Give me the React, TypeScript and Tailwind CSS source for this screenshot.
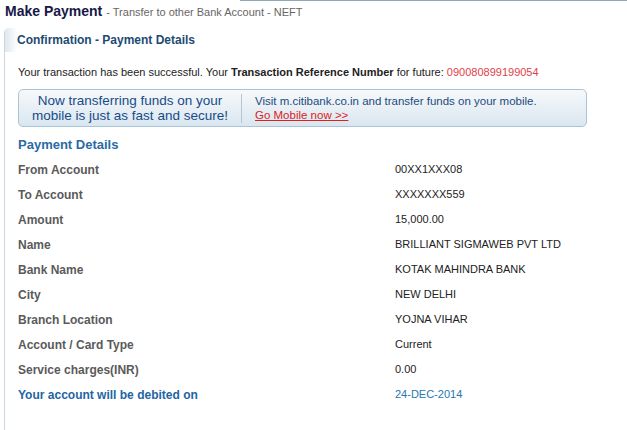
import React from 'react';

const rows: { label: string; value: string }[] = [
  { label: 'From Account', value: '00XX1XXX08' },
  { label: 'To Account', value: 'XXXXXXX559' },
  { label: 'Amount', value: '15,000.00' },
  { label: 'Name', value: 'BRILLIANT SIGMAWEB PVT LTD' },
  { label: 'Bank Name', value: 'KOTAK MAHINDRA BANK' },
  { label: 'City', value: 'NEW DELHI' },
  { label: 'Branch Location', value: 'YOJNA VIHAR' },
  { label: 'Account / Card Type', value: 'Current' },
  { label: 'Service charges(INR)', value: '0.00' },
];

const App: React.FC = () => {
  return (
    <div className="w-[627px] h-[430px] bg-white overflow-hidden font-['Liberation_Sans',Arial,sans-serif] flex flex-col">
      {/* top rule */}
      <div className="h-px ml-[240px] bg-[#8fa6b6]" />

      {/* Title */}
      <div className="flex items-baseline pl-[5px] pt-[2px] leading-[16px]">
        <span className="text-[14px] font-bold text-[#181848]">Make Payment</span>
        <span className="text-[11px] text-[#666] ml-[4px]">- Transfer to other Bank Account - NEFT</span>
      </div>

      {/* Panel */}
      <div className="flex-1 mt-[8px] ml-[4px] border-l border-[#c8d7e2] rounded-tl-[5px] flex flex-col">
        <div className="h-[24px] pl-[12px] rounded-tl-[5px] bg-gradient-to-r from-[#dfe7ee] from-0% via-white via-[2%] to-white text-[12px] font-bold text-[#1d4a72] leading-[24px]">
          Confirmation - Payment Details
        </div>

        <div className="pl-[13px] flex flex-col">
          <p className="mt-[14px] text-[11px] leading-[13px] text-[#222]">
            Your transaction has been successful. Your <span className="font-bold">Transaction Reference Number</span> for
            future: <span className="text-[#e2404a]">090080899199054</span>
          </p>

          {/* Mobile banner */}
          <div className="mt-[10px] w-[569px] h-[38px] rounded-[5px] border border-[#a9c4d7] bg-gradient-to-b from-[#f6f9fb] to-[#dae7f0] flex items-center">
            <div className="w-[222px] flex flex-col items-center text-[13.5px] leading-[15px] text-[#174b88]">
              <span>Now transferring funds on your</span>
              <span>mobile is just as fast and secure!</span>
            </div>
            <div className="w-px h-[29px] bg-[#b3c6d4]" />
            <div className="pl-[13px] flex flex-col items-start text-[11.5px] leading-[14px] text-[#1f4a7c]">
              <span>Visit m.citibank.co.in and transfer funds on your mobile.</span>
              <span className="text-[#e0201c] underline decoration-[#e0201c]">Go Mobile now &gt;&gt;</span>
            </div>
          </div>

          <h2 className="mt-[10px] text-[13px] leading-[15px] font-bold text-[#2b6aa6]">Payment Details</h2>

          <div className="mt-[5px] flex flex-col">
            {rows.map((r) => (
              <div key={r.label} className="h-[25px] flex items-center">
                <div className="w-[377px] text-[12px] font-bold text-[#5a5a5a]">{r.label}</div>
                <div className="text-[11px] text-[#222]">{r.value}</div>
              </div>
            ))}
            <div className="h-[25px] flex items-center">
              <div className="w-[377px] text-[12px] font-bold text-[#1f64a4]">Your account will be debited on</div>
              <div className="text-[11px] text-[#2477b3]">24-DEC-2014</div>
            </div>
          </div>
        </div>
      </div>
    </div>
  );
};

export default App;
